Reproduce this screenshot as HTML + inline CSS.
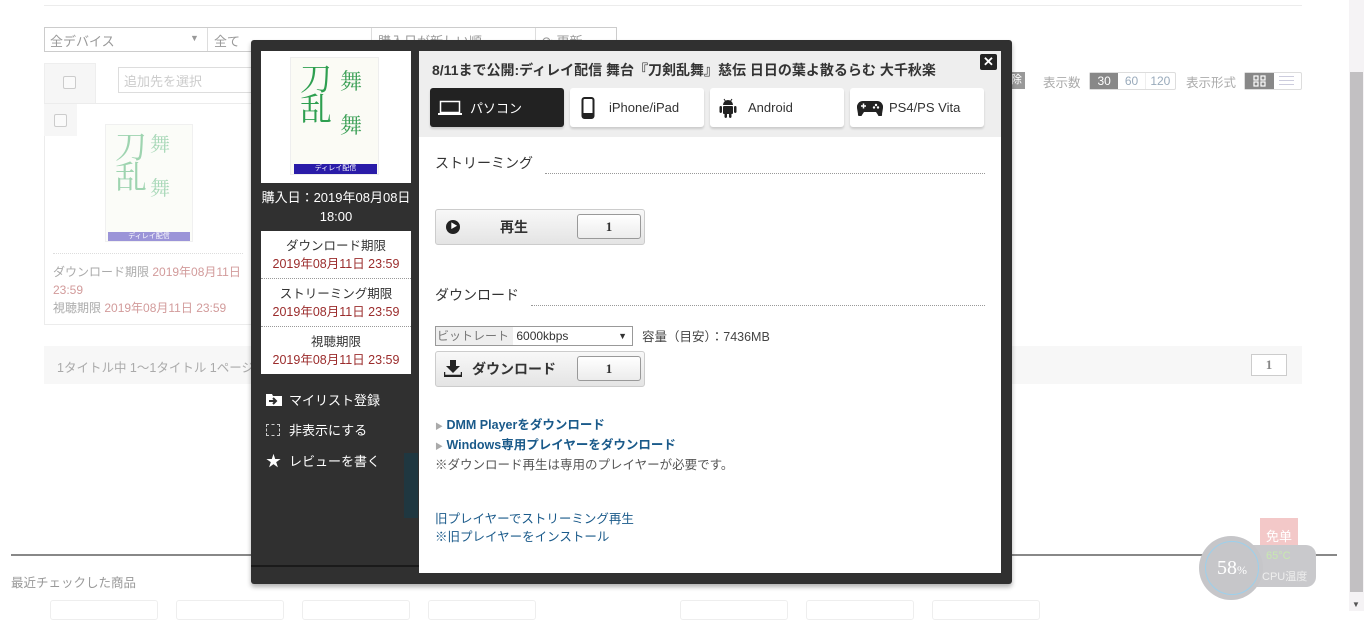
<!DOCTYPE html>
<html><head><meta charset="utf-8"><style>
*{box-sizing:border-box;margin:0;padding:0}
body{width:1364px;height:611px;overflow:hidden;background:#fff;font-family:"Liberation Sans","Noto Sans CJK JP",sans-serif;font-size:12px;color:#333;position:relative}
.a{position:absolute}
.dim{color:#aaa}
.card{position:absolute;border:1px solid #ececec;background:#fff}
.lbl{color:#aaa;font-size:12px}
.red{color:#9b2c2c}
.tab{position:absolute;top:88px;height:39px;background:#fff;border-radius:3px;box-shadow:0 2px 2px rgba(0,0,0,.15);font-size:13px;color:#333;display:flex;align-items:center}
.btn{position:absolute;left:435px;width:210px;height:36px;background:linear-gradient(#f8f8f8,#e4e4e4);border:1px solid #ccc;border-radius:3px}
.cnt{position:absolute;left:141px;top:4px;width:64px;height:25px;border:1px solid #999;border-radius:3px;background:linear-gradient(#fff,#ececec);text-align:center;line-height:23px;font-family:"Liberation Serif",serif;font-weight:bold;font-size:13px}
.sec{position:absolute;font-size:14px;color:#333}
.dot{position:absolute;border-top:1px dotted #999;height:0}
.lim{background:#fff;text-align:center;font-size:12.5px;line-height:18px;padding:6px 0 5px}
.mi{position:absolute;left:266px;color:#fff;font-size:13px}
a{color:#1a5a8a;text-decoration:none}
</style></head><body>
<div class="a" style="left:44px;top:0;width:1258px;height:6px;border-bottom:1px solid #ececec"></div>
<div class="a" style="left:44px;top:27px;width:573px;height:25px;border:1px solid #ccc;background:#fff"></div>
<div class="a" style="left:50px;top:31px;font-size:13px;color:#999">全デバイス</div>
<div class="a" style="left:190px;top:33px;color:#999;font-size:9px">▼</div>
<div class="a" style="left:207px;top:28px;width:1px;height:23px;background:#ddd"></div>
<div class="a" style="left:214px;top:31px;font-size:13px;color:#999">全て</div>
<div class="a" style="left:371px;top:28px;width:1px;height:23px;background:#ddd"></div>
<div class="a" style="left:378px;top:31px;font-size:13px;color:#999">購入日が新しい順</div>
<div class="a" style="left:535px;top:28px;width:1px;height:23px;background:#ddd"></div>
<div class="a" style="left:542px;top:31px;font-size:13px;color:#999">⟳ 更新</div>
<div class="a" style="left:44px;top:63px;width:52px;height:42px;background:#f6f6f6;border:1px solid #eee"></div>
<div class="a" style="left:63px;top:76px;width:13px;height:13px;border:1px solid #ccc;border-radius:2px;background:#fafafa"></div>
<div class="a" style="left:118px;top:67px;width:135px;height:26px;border:1px solid #ddd"></div>
<div class="a" style="left:124px;top:71px;font-size:13px;color:#ccc">追加先を選択</div>
<div class="card" style="left:44px;top:103px;width:210px;height:222px"></div>
<div class="a" style="left:44px;top:104px;width:33px;height:32px;background:#f6f6f6"></div>
<div class="a" style="left:54px;top:114px;width:13px;height:13px;border:1px solid #ccc;border-radius:2px;background:#fafafa"></div>
<div class="a" style="left:105px;top:124px;width:88px;height:118px;background:#fbfcf8;border:1px solid #f0f0f0"></div>
<div class="a" style="left:115px;top:130px;font-size:32px;color:#9ed4b0;line-height:30px;font-family:'Noto Serif CJK SC',serif">刀<br>乱</div>
<div class="a" style="left:150px;top:132px;font-size:20px;color:#a8d8b8;line-height:22px;font-family:'Noto Serif CJK SC',serif">舞<br><br>舞</div>
<div class="a" style="left:108px;top:232px;width:82px;height:9px;background:#9b94d8;color:#fff;font-size:7px;text-align:center;line-height:9px">ディレイ配信</div>
<div class="a" style="left:53px;top:253px;width:190px;border-top:1px dotted #ddd"></div>
<div class="a" style="left:53px;top:263px;line-height:18px;font-size:12px"><span class="lbl">ダウンロード期限</span> <span style="color:#d29b9b">2019年08月11日<br>23:59</span><br><span class="lbl">視聴期限</span> <span style="color:#d29b9b">2019年08月11日 23:59</span></div>
<div class="a" style="left:44px;top:346px;width:1258px;height:38px;background:#f7f7f7"></div>
<div class="a" style="left:57px;top:357px;color:#aaa;font-size:12.5px">1タイトル中 1～1タイトル 1ページ目</div>
<div class="a" style="left:1251px;top:354px;width:36px;height:22px;border:1px solid #ccc;background:#fff;text-align:center;line-height:20px;font-family:'Liberation Serif',serif;color:#888;font-size:13px;font-weight:bold">1</div>
<div class="a" style="left:1011px;top:72px;width:14px;height:17px;background:#999;color:#fff;font-size:11px;line-height:17px">除</div>
<div class="a" style="left:1043px;top:72px;color:#aaa;font-size:12.5px">表示数</div>
<div class="a" style="left:1089px;top:72px;width:87px;height:18px;border:1px solid #ddd;border-radius:2px;display:flex;font-size:12px;line-height:16px"><span style="width:29px;background:#888;color:#fff;text-align:center">30</span><span style="width:28px;color:#9ab;text-align:center;border-right:1px solid #eee">60</span><span style="width:30px;color:#9ab;text-align:center">120</span></div>
<div class="a" style="left:1186px;top:72px;color:#aaa;font-size:12.5px">表示形式</div>
<div class="a" style="left:1244px;top:72px;width:58px;height:18px;border:1px solid #ddd;border-radius:2px"><div style="width:29px;height:16px;background:#888"><svg width="29" height="16"><g fill="none" stroke="#fff" stroke-width="1.2"><rect x="9" y="3" width="4" height="4"/><rect x="16" y="3" width="4" height="4"/><rect x="9" y="9" width="4" height="4"/><rect x="16" y="9" width="4" height="4"/></g></svg></div></div>
<div class="a" style="left:1279px;top:76px;width:15px;height:1px;background:#ccd;box-shadow:0 4px 0 #ccd,0 8px 0 #ccd"></div>
<div class="a" style="left:1349px;top:0;width:15px;height:611px;background:#f5f3f5"></div>
<div class="a" style="left:1350px;top:72px;width:13px;height:520px;background:#c2c0c2"></div>
<div class="a" style="left:1352px;top:600px;font-size:8px;color:#555">▼</div>
<div class="a" style="left:11px;top:554px;width:1326px;height:2px;background:#888"></div>
<div class="a" style="left:11px;top:572px;color:#999;font-size:12.5px">最近チェックした商品</div>
<div class="a" style="left:50px;top:600px;width:108px;height:20px;border:1px solid #eee;border-radius:3px"></div>
<div class="a" style="left:176px;top:600px;width:108px;height:20px;border:1px solid #eee;border-radius:3px"></div>
<div class="a" style="left:302px;top:600px;width:108px;height:20px;border:1px solid #eee;border-radius:3px"></div>
<div class="a" style="left:428px;top:600px;width:108px;height:20px;border:1px solid #eee;border-radius:3px"></div>
<div class="a" style="left:680px;top:600px;width:108px;height:20px;border:1px solid #eee;border-radius:3px"></div>
<div class="a" style="left:806px;top:600px;width:108px;height:20px;border:1px solid #eee;border-radius:3px"></div>
<div class="a" style="left:932px;top:600px;width:108px;height:20px;border:1px solid #eee;border-radius:3px"></div>
<div class="a" style="left:1260px;top:518px;width:38px;height:30px;background:#f3c8c8;color:#fff;font-size:13px;text-align:center;line-height:38px">免单</div>
<div class="a" style="left:1240px;top:545px;width:76px;height:42px;background:#c9c9cc;border-radius:10px"></div>
<div class="a" style="left:1199px;top:536px;width:64px;height:64px;border-radius:50%;background:#c6c6c9"></div>
<div class="a" style="left:1205px;top:541px;width:54px;height:54px;border-radius:50%;border:1.5px solid #9cd0ec;color:#fff;text-align:center;line-height:52px;font-size:20px;font-family:'Liberation Serif',serif">58<span style="font-size:12px">%</span></div>
<div class="a" style="left:1266px;top:550px;color:#c8e8b0;font-size:11px">65°C</div>
<div class="a" style="left:1262px;top:568px;color:#eee;font-size:11px">CPU温度</div>
<!-- modal -->
<div class="a" style="left:251px;top:40px;width:761px;height:544px;background:#303030;border-radius:3px;box-shadow:0 3px 5px rgba(0,0,0,.3)"></div>
<div class="a" style="left:251px;top:565px;width:168px;height:2px;background:#1a1a1a"></div>
<div class="a" style="left:404px;top:453px;width:14px;height:65px;background:#1f3740"></div>
<div class="a" style="left:261px;top:51px;width:150px;height:132px;background:#fff"></div>
<div class="a" style="left:290px;top:57px;width:89px;height:118px;background:#fbfbf5;border:1px solid #eee"></div>
<div class="a" style="left:300px;top:62px;font-size:32px;color:#2e9f50;line-height:30px;font-family:'Noto Serif CJK SC',serif">刀<br>乱</div>
<div class="a" style="left:340px;top:70px;font-size:22px;color:#3a9f55;line-height:22px;font-family:'Noto Serif CJK SC',serif">舞<br><br>舞</div>
<div class="a" style="left:294px;top:164px;width:83px;height:10px;background:#2a1ca8;color:#fff;font-size:7px;text-align:center;line-height:10px">ディレイ配信</div>
<div class="a" style="left:261px;top:188px;width:150px;color:#fff;text-align:center;font-size:13px;line-height:19px">購入日：2019年08月08日<br>18:00</div>
<div class="a" style="left:261px;top:231px;width:150px">
<div class="lim">ダウンロード期限<br><span class="red">2019年08月11日 23:59</span></div>
<div class="lim" style="border-top:1px dotted #999">ストリーミング期限<br><span class="red">2019年08月11日 23:59</span></div>
<div class="lim" style="border-top:1px dotted #999">視聴期限<br><span class="red">2019年08月11日 23:59</span></div>
</div>
<div class="mi" style="top:390px"><svg width="16" height="13" style="margin-right:7px;vertical-align:-1px"><path d="M0 1h6l1 2h9v10H0z" fill="#fff"/><path d="M3 8h6M7 5l3 3-3 3" stroke="#303030" stroke-width="2" fill="none"/></svg>マイリスト登録</div>
<div class="mi" style="top:420px"><span style="display:inline-block;width:14px;height:12px;border:1px dashed #ccc;margin-right:9px;vertical-align:-1px"></span>非表示にする</div>
<div class="mi" style="top:450px"><span style="font-size:15px;margin-right:8px">★</span>レビューを書く</div>
<div class="a" style="left:419px;top:51px;width:582px;height:522px;background:#fff"></div>
<div class="a" style="left:419px;top:51px;width:582px;height:86px;background:#eeeeee"></div>
<div class="a" style="left:432px;top:60px;font-size:14px;font-weight:bold;color:#333">8/11まで公開:ディレイ配信 舞台『刀剣乱舞』慈伝 日日の葉よ散るらむ 大千秋楽</div>
<div class="a" style="left:980px;top:54px;width:17px;height:16px;background:#222;border-radius:2px;color:#fff;font-size:13px;font-weight:bold;text-align:center;line-height:16px">✕</div>
<div class="tab" style="left:430px;width:134px;background:#222;color:#fff"><svg width="24" height="16" style="margin:0 8px 0 8px"><rect x="2.5" y="1.5" width="19" height="11" fill="none" stroke="#fff" stroke-width="1.5"/><rect x="0" y="13" width="24" height="2" fill="#fff"/></svg>パソコン</div>
<div class="tab" style="left:570px;width:134px"><svg width="14" height="22" style="margin:0 14px 0 11px"><rect x="1.5" y="1" width="11" height="20" rx="2" fill="none" stroke="#222" stroke-width="2"/><rect x="2" y="16" width="10" height="4" fill="#222"/></svg>iPhone/iPad</div>
<div class="tab" style="left:710px;width:134px"><svg width="18" height="20" style="margin:0 11px 0 9px"><path d="M4 7a5 5 0 0 1 10 0z" fill="#222"/><rect x="4" y="8" width="10" height="8" rx="1" fill="#222"/><rect x="0.5" y="8" width="2.5" height="7" rx="1.2" fill="#222"/><rect x="15" y="8" width="2.5" height="7" rx="1.2" fill="#222"/><rect x="5.5" y="15" width="2.5" height="5" rx="1.2" fill="#222"/><rect x="10" y="15" width="2.5" height="5" rx="1.2" fill="#222"/><path d="M5 1l2 3M13 1l-2 3" stroke="#222"/></svg>Android</div>
<div class="tab" style="left:850px;width:134px"><svg width="26" height="16" style="margin:0 6px 0 7px"><path d="M6 1h14a6 6 0 0 1 6 7l-1 6a2 2 0 0 1-4 1l-2-3H7l-2 3a2 2 0 0 1-4-1L0 8a6 6 0 0 1 6-7z" fill="#222"/><path d="M4 6h5M6.5 3.5v5" stroke="#fff" stroke-width="1.5"/><circle cx="19" cy="5" r="1.2" fill="#fff"/><circle cx="21" cy="7.5" r="1.2" fill="#fff"/><circle cx="17" cy="7.5" r="1.2" fill="#fff"/></svg>PS4/PS Vita</div>
<div class="sec" style="left:435px;top:153px">ストリーミング</div>
<div class="dot" style="left:545px;top:173px;width:440px"></div>
<div class="btn" style="top:209px"><span class="a" style="left:10px;top:10px;width:14px;height:14px;border-radius:50%;background:#222;color:#fff;font-size:7px;text-align:center;line-height:14px;padding-left:2px">▶</span><span class="a" style="left:64px;top:7px;font-size:14px;font-weight:bold">再生</span><div class="cnt">1</div></div>
<div class="sec" style="left:435px;top:285px">ダウンロード</div>
<div class="dot" style="left:531px;top:305px;width:454px"></div>
<div class="a" style="left:435px;top:326px;width:198px;height:20px;border:1px solid #999;background:#fff;font-size:12px;line-height:18px"><span style="background:#eee;color:#777;padding:0 4px 0 1px;display:inline-block">ビットレート</span> 6000kbps<span class="a" style="right:5px;top:0;font-size:9px">▼</span></div>
<div class="a" style="left:642px;top:326px;font-size:12.5px;color:#444">容量（目安）：7436MB</div>
<div class="btn" style="top:351px"><svg class="a" style="left:8px;top:8px" width="18" height="17"><path d="M6 0h6v6h4l-7 7-7-7h4z" fill="#222"/><path d="M0 12v4h18v-4" stroke="#222" stroke-width="2.5" fill="none"/></svg><span class="a" style="left:36px;top:7px;font-size:14px;font-weight:bold">ダウンロード</span><div class="cnt">1</div></div>
<div class="a" style="left:435px;top:416px;font-size:12.5px;line-height:18px;color:#555"><span style="color:#aaa;font-size:8px">▶</span> <a style="font-weight:bold">DMM Playerをダウンロード</a><br><span style="color:#aaa;font-size:8px">▶</span> <a style="font-weight:bold">Windows専用プレイヤーをダウンロード</a><br>※ダウンロード再生は専用のプレイヤーが必要です。</div>
<div class="a" style="left:435px;top:510px;font-size:12.5px;line-height:18px"><a>旧プレイヤーでストリーミング再生</a><br><a>※旧プレイヤーをインストール</a></div>
</body></html>
